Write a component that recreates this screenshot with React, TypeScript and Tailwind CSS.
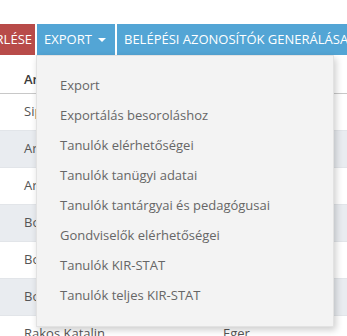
const rows = [
  { name: "Sipos Márton", city: "Budapest", shade: false },
  { name: "Arany Zsófia", city: "Debrecen", shade: true },
  { name: "Arató Bence", city: "Szeged", shade: false },
  { name: "Bodnár Lilla", city: "Pécs", shade: true },
  { name: "Bognár Ádám", city: "Győr", shade: false },
  { name: "Boros Eszter", city: "Miskolc", shade: true },
  { name: "Rakos Katalin", city: "Eger", shade: false },
];

const menuItems = [
  "Export",
  "Exportálás besoroláshoz",
  "Tanulók elérhetőségei",
  "Tanulók tanügyi adatai",
  "Tanulók tantárgyai és pedagógusai",
  "Gondviselők elérhetőségei",
  "Tanulók KIR-STAT",
  "Tanulók teljes KIR-STAT",
];

const App = () => {
  return (
    <div className="relative w-[347px] h-[336px] overflow-hidden bg-white font-['Open_Sans',sans-serif] whitespace-nowrap">
      {/* Toolbar */}
      <div className="flex mt-[24px] h-[31px] gap-[2px] text-[13px] text-white uppercase">
        <div className="w-[35px] shrink-0 bg-[#b84b49] flex items-center justify-end pr-[3px] overflow-hidden">
          <span>TÖRLÉSE</span>
        </div>
        <div className="shrink-0 w-[78px] bg-[#53a5d5] flex items-center pl-[7px]">
          <span>Export</span>
          <span className="ml-[6px] mt-[1px] w-0 h-0 border-l-[4px] border-r-[4px] border-t-[4px] border-l-transparent border-r-transparent border-t-white" />
        </div>
        <div className="shrink-0 bg-[#53a5d5] flex items-center pl-[7px] pr-[10px]">
          <span>Belépési azonosítók generálása</span>
        </div>
      </div>

      {/* Table */}
      <div className="text-[13px] text-[#555]">
        <div className="h-[39px] flex items-end pb-[4px] pl-[24px] border-b border-[#c8c8c8] font-semibold text-[#3a3a3a]">
          <span className="w-[199px]">Anyja neve</span>
          <span>Település</span>
        </div>
        {rows.map((r) => (
          <div
            key={r.name}
            className={`h-[37px] flex items-center pl-[24px] border-b border-[#e2e5e9] ${r.shade ? "bg-[#e9ecf0]" : "bg-white"}`}
          >
            <span className="w-[199px]">{r.name}</span>
            <span>{r.city}</span>
          </div>
        ))}
      </div>

      {/* Dropdown */}
      <div className="absolute left-[36px] top-[55px] w-[298px] py-[15px] bg-[#f3f3f3] border border-[#e2e2e2] shadow-[2px_3px_7px_rgba(0,0,0,0.2)]">
        {menuItems.map((item) => (
          <div key={item} className="h-[30px] flex items-center pl-[23px] text-[13px] text-[#666]">
            {item}
          </div>
        ))}
      </div>
    </div>
  );
};

export default App;
